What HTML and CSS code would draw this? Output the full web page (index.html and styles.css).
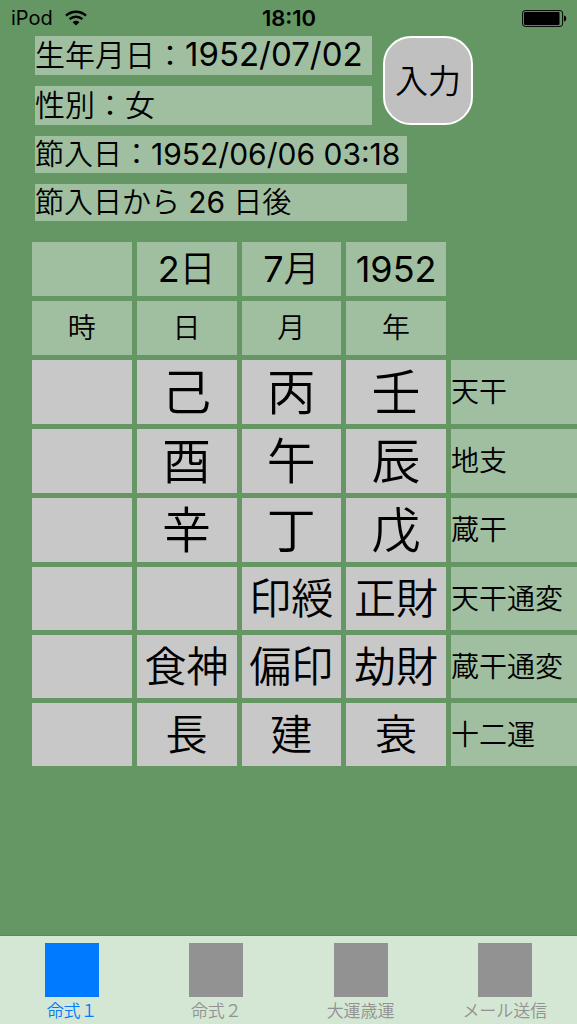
FILE: index.html
```
<!DOCTYPE html>
<html lang="ja">
<head>
<meta charset="utf-8">
<meta name="viewport" content="width=device-width, initial-scale=1">
<title>命式</title>
<link rel="stylesheet" href="styles.css">
</head>
<body>
<header class="status">
  <div class="carrier">
    <span class="num">iPod</span>
    <svg class="wifi" viewBox="0 0 22 16" aria-hidden="true">
      <path d="M1 5.6C6.6 .3 15.4 .3 21 5.6" />
      <path d="M4.6 9.2c3.700-3.400 9.100-3.400 12.800 0" />
      <path class="dot" d="M7.600 12.200c2-1.800 4.800-1.800 6.800 0L11 15.600z" />
    </svg>
  </div>
  <time class="clock">18:10</time>
  <svg class="battery" viewBox="0 0 45 17" aria-hidden="true">
    <rect class="shell" x=".6" y=".6" width="40" height="15.800" rx="2.500" />
    <rect x="2" y="2" width="35.500" height="13" rx="1" />
    <path d="M42 5.500c3 .6 3 5.400 0 6z" />
  </svg>
</header>

<main class="content">
  <section class="info">
    <div class="person">
      <div class="fields">
        <p class="field large">生年月日：<span class="num">1952/07/02</span></p>
        <p class="field large">性別：女</p>
      </div>
      <button class="enter" type="button">入力</button>
    </div>
    <p class="field wide">節入日：<span class="num">1952/06/06 03:18</span></p>
    <p class="field wide">節入日から <span class="num">26</span> 日後</p>
  </section>

  <div class="chart">
    <table>
      <thead>
        <tr class="date"><td></td><td><span class="num">2</span>日</td><td><span class="num">7</span>月</td><td><span class="num">1952</span></td></tr>
        <tr class="unit"><th scope="col">時</th><th scope="col">日</th><th scope="col">月</th><th scope="col">年</th></tr>
      </thead>
      <tbody class="stems">
        <tr><td></td><td>己</td><td>丙</td><td>壬</td><th scope="row">天干</th></tr>
        <tr><td></td><td>酉</td><td>午</td><td>辰</td><th scope="row">地支</th></tr>
        <tr><td></td><td>辛</td><td>丁</td><td>戊</td><th scope="row">蔵干</th></tr>
      </tbody>
      <tbody class="stars">
        <tr><td></td><td></td><td>印綬</td><td>正財</td><th scope="row">天干通変</th></tr>
        <tr><td></td><td>食神</td><td>偏印</td><td>劫財</td><th scope="row">蔵干通変</th></tr>
        <tr><td></td><td>長</td><td>建</td><td>衰</td><th scope="row">十二運</th></tr>
      </tbody>
    </table>
  </div>
</main>

<nav class="tabs">
  <button class="tab active" type="button" aria-current="page"><span class="icon"></span>命式１</button>
  <button class="tab" type="button"><span class="icon"></span>命式２</button>
  <button class="tab" type="button"><span class="icon"></span>大運歳運</button>
  <button class="tab" type="button"><span class="icon"></span>メール送信</button>
</nav>
</body>
</html>
```
FILE: styles.css
```
* {
  box-sizing: border-box;
}

body {
  margin: 0;
  min-height: 100vh;
  display: flex;
  flex-direction: column;
  background: #649764;
  color: #000;
  font-family: Inter, "Noto Sans CJK JP", sans-serif;
  font-weight: 350;
}

button {
  font: inherit;
  border: 0;
  padding: 0;
  background: none;
}

.status {
  display: grid;
  grid-template-columns: 1fr auto 1fr;
  align-items: center;
  height: 36px;
  padding: 0 10px 0 11px;
  font-size: 20px;
}

.carrier {
  display: flex;
  align-items: center;
  gap: 12px;
}

.wifi {
  width: 22px;
  height: 16px;
  fill: none;
  stroke: #000;
  stroke-width: 2.500;
}

.wifi .dot {
  fill: #000;
  stroke: none;
}

.clock {
  font-size: 22px;
  font-weight: 600;
}

.battery {
  width: 45px;
  height: 17px;
  justify-self: end;
}

.battery .shell {
  fill: none;
  stroke: #000;
}

.content {
  flex: 1;
}

.info {
  display: flex;
  flex-direction: column;
  gap: 11px;
  padding-left: 35px;
}

.person {
  display: flex;
  gap: 11px;
}

.fields {
  display: flex;
  flex-direction: column;
  gap: 11px;
  width: 62.2%;
}

.num {
  font-weight: 400;
}

.field {
  margin: 0;
  background: #a0bfa0;
  font-size: 29px;
  line-height: 37px;
  white-space: nowrap;
}

.field .num {
  font-size: 30px;
  line-height: 1;
}

.field.large {
  font-size: 30px;
  line-height: 39px;
}

.field.large .num {
  font-size: 33px;
}

.field.wide {
  width: 68.6%;
}

.enter {
  width: 90px;
  padding-bottom: 4px;
  border: 2px solid #fff;
  border-radius: 28px;
  background: #c0c0c0;
  color: #000;
  font-size: 33px;
}

.chart {
  margin-top: 16px;
  padding-left: 27px;
  overflow: hidden;
}

table {
  width: calc(100% + 5px);
  table-layout: fixed;
  border-spacing: 5px;
}

td,
th {
  padding: 0;
  background: #a0bfa0;
  font-weight: 350;
  line-height: 1;
  white-space: nowrap;
  text-align: center;
}

td:nth-child(-n+4),
th:nth-child(-n+4) {
  width: 19%;
}

thead tr {
  height: 54px;
}

.date td {
  font-size: 36px;
}

.unit th {
  font-size: 28px;
}

tbody td {
  background: #c8c8c8;
}

tbody th {
  font-size: 28px;
  text-align: left;
}

.stems tr {
  height: 64px;
}

.stems td {
  font-size: 49px;
}

.stars tr {
  height: 63px;
}

.stars td {
  font-size: 42px;
}

.tabs {
  display: grid;
  grid-template-columns: repeat(4, 1fr);
  border-top: 1px solid #5c875c;
  background: #d4e7d4;
  padding-top: 7px;
}

.tab {
  display: flex;
  flex-direction: column;
  align-items: center;
  gap: 2px;
  color: #929292;
  font-size: 17px;
  line-height: 25px;
}

.tab .icon {
  width: 54px;
  height: 54px;
  background: currentColor;
}

.tab.active {
  color: #007aff;
}
```
